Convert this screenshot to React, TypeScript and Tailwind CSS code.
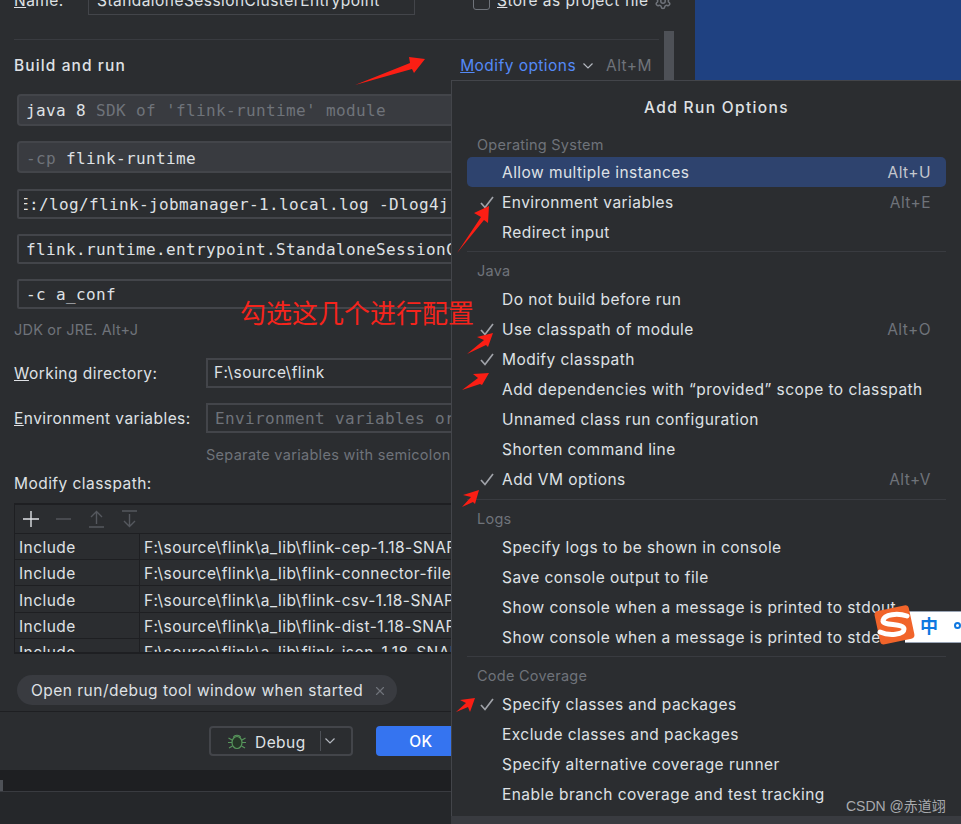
import React from "react";
import { Settings, X } from "lucide-react";

const ui = { fontFamily: "Inter, 'Noto Sans', sans-serif" };
const mono = { fontFamily: "'DejaVu Sans Mono', monospace" };

function Chevron({ className = "" }: { className?: string }) {
  return (
    <svg width="12" height="8" viewBox="0 0 12 8" className={className} fill="none" stroke="#b4b8bf" strokeWidth="1.2">
      <path d="M1.5 1.5 L6 6 L10.5 1.5" />
    </svg>
  );
}

function CheckMark() {
  return (
    <svg width="14" height="13" viewBox="0 0 14 13" fill="none" stroke="#a0a3a9" strokeWidth="1.7">
      <path d="M1 7 L5 11.5 L13 1" />
    </svg>
  );
}

function Item({ label, checked, hint, active }: { label: string; checked?: boolean; hint?: string; active?: boolean }) {
  return (
    <div className={`mx-[15px] flex h-[30px] shrink-0 items-center rounded-[5px] pr-[15px] pt-[1px] ${active ? "bg-[#2e436e]" : ""}`}>
      <div className="flex w-[35px] shrink-0 justify-end pr-[8px]">{checked && <CheckMark />}</div>
      <span className="whitespace-nowrap text-[#dfe1e5]">{label}</span>
      {hint && <span className={`ml-auto ${active ? "text-[#c4c7cd]" : "text-[#6f737a]"}`}>{hint}</span>}
    </div>
  );
}

function Label({ text, className = "" }: { text: string; className?: string }) {
  return <div className={`ml-[25px] h-[20px] text-[14.5px] leading-[20px] tracking-[0.25px] text-[#6f737a] ${className}`}>{text}</div>;
}

function Sep({ className = "" }: { className?: string }) {
  return <div className={`mx-[15px] h-px bg-[#393b40] ${className}`} />;
}

function Popup() {
  return (
    <div className="absolute left-[451px] top-[80px] flex h-[736px] w-[510px] flex-col overflow-hidden border-l border-t border-[#43454a] bg-[#2b2d30] text-[15.5px] tracking-[0.45px]" style={ui}>
      <div className="mt-[17px] h-[20px] pl-[20px] text-center font-medium leading-[20px] tracking-[1.35px] text-[#dfe1e5]">Add Run Options</div>
      <Label text="Operating System" className="mt-[17px]" />
      <div className="h-[2px]" />
      <Item label="Allow multiple instances" hint="Alt+U" active />
      <Item label="Environment variables" checked hint="Alt+E" />
      <Item label="Redirect input" />
      <Sep className="mt-[4px]" />
      <Label text="Java" className="mt-[9px]" />
      <div className="h-[3px]" />
      <Item label="Do not build before run" />
      <Item label="Use classpath of module" checked hint="Alt+O" />
      <Item label="Modify classpath" checked />
      <Item label="Add dependencies with “provided” scope to classpath" />
      <Item label="Unnamed class run configuration" />
      <Item label="Shorten command line" />
      <Item label="Add VM options" checked hint="Alt+V" />
      <Sep className="mt-[5px]" />
      <Label text="Logs" className="mt-[9px]" />
      <div className="h-[3px]" />
      <Item label="Specify logs to be shown in console" />
      <Item label="Save console output to file" />
      <Item label="Show console when a message is printed to stdout" />
      <Item label="Show console when a message is printed to stderr" />
      <Sep className="mt-[4px]" />
      <Label text="Code Coverage" className="mt-[9px]" />
      <div className="h-[3px]" />
      <Item label="Specify classes and packages" checked />
      <Item label="Exclude classes and packages" />
      <Item label="Specify alternative coverage runner" />
      <Item label="Enable branch coverage and test tracking" />
    </div>
  );
}

function Field({ children, filled, className = "" }: { children: React.ReactNode; filled?: boolean; className?: string }) {
  return (
    <div
      className={`ml-[17px] flex w-[643px] items-center overflow-hidden whitespace-nowrap border-2 pl-[7px] pt-[1px] text-[16px] tracking-[0.37px] ${
        filled ? "h-[32px] rounded-[4px] border-[#43454a] bg-[#393b40]" : "h-[30px] rounded-[2px] border-[#43454a]"
      } ${className}`}
      style={mono}
    >
      {children}
    </div>
  );
}

const rows = [
  { path: "F:\\source\\flink\\a_lib\\flink-cep-1.18-SNAPSHOT.jar", h: "h-[26px]" },
  { path: "F:\\source\\flink\\a_lib\\flink-connector-files-1.18-SNAPSHOT.jar", h: "h-[26px]" },
  { path: "F:\\source\\flink\\a_lib\\flink-csv-1.18-SNAPSHOT.jar", h: "h-[27px]" },
  { path: "F:\\source\\flink\\a_lib\\flink-dist-1.18-SNAPSHOT.jar", h: "h-[26px]" },
  { path: "F:\\source\\flink\\a_lib\\flink-json-1.18-SNAPSHOT.jar", h: "h-[26px]" },
];

function Toolbar() {
  return (
    <div className="flex h-[29px] items-center border-b border-[#1e1f22]">
      <svg width="120" height="24" viewBox="0 0 120 24" fill="none" className="ml-[4px]">
        <path d="M12 4 V20 M4 12 H20" stroke="#dfe1e5" strokeWidth="1.4" />
        <path d="M37 12 H52" stroke="#55585e" strokeWidth="1.4" />
        <path d="M70 20 H85 M77.5 17 V5 M72 10 L77.5 4.5 L83 10" stroke="#55585e" strokeWidth="1.4" />
        <path d="M103 4 H118 M110.5 7 V19 M105 14 L110.5 19.5 L116 14" stroke="#55585e" strokeWidth="1.4" />
      </svg>
    </div>
  );
}

function Dialog() {
  return (
    <div className="w-[695px] shrink-0 bg-[#2b2d30] text-[15.5px] tracking-[0.45px] text-[#dfe1e5]" style={ui}>
      <div className="flex h-[15px] items-end overflow-hidden pl-[14px]">
        <span className="w-[74px] pb-[5px] leading-[18px]"><u>N</u>ame:</span>
        <div className="flex h-[24px] w-[327px] items-center border border-[#43454a] pl-[8px]">
          <span className="-mt-[4px] whitespace-nowrap">StandaloneSessionClusterEntrypoint</span>
        </div>
        <div className="mb-[5px] ml-[58px] h-[16px] w-[17px] shrink-0 rounded-[3px] border border-[#6f737a]" />
        <span className="ml-[7px] whitespace-nowrap pb-[5px] leading-[18px]"><u>S</u>tore as project file</span>
        <Settings size={18} className="mb-[5px] ml-[5px] text-[#6f737a]" />
      </div>
      <div className="ml-[14px] mt-[24px] h-px w-[645px] bg-[#393b40]" />
      <div className="flex h-[50px] items-center pl-[14px] pr-[43px] pt-[1px]">
        <span className="font-medium tracking-[1.1px]">Build and run</span>
        <span className="ml-auto text-[#548af7]"><u>M</u>odify options</span>
        <Chevron className="ml-[6px]" />
        <span className="ml-[12px] text-[#6f737a]">Alt+M</span>
      </div>

      <Field filled className="mt-[4px]">
        <span>java 8</span>
        <span className="ml-[10px] text-[#6f737a]">SDK of 'flink-runtime' module</span>
      </Field>
      <Field filled className="mt-[15px] !pt-[3px]">
        <span className="text-[#6f737a]">-cp</span>
        <span className="ml-[10px]">flink-runtime</span>
      </Field>
      <Field className="mt-[16px] !pl-[5px]">
        <div className="overflow-hidden">
          <div className="-ml-[5px]">E:/log/flink-jobmanager-1.local.log -Dlog4j.configurationFile=conf/log4j.properties</div>
        </div>
      </Field>
      <Field className="mt-[15px]">flink.runtime.entrypoint.StandaloneSessionClusterEntrypoint</Field>
      <Field className="mt-[15px]">-c a_conf</Field>
      <div className="ml-[14px] mt-[11px] h-[20px] text-[14.5px] leading-[20px] tracking-[0.2px] text-[#6f737a]">JDK or JRE. Alt+J</div>

      <div className="mt-[18px] flex h-[30px] items-center pl-[14px]">
        <span className="w-[192px] pt-[1px]"><u>W</u>orking directory:</span>
        <div className="flex h-[30px] w-[440px] items-center border-2 border-[#43454a] pl-[6px]">F:\source\flink</div>
      </div>
      <div className="mt-[15px] flex h-[30px] items-center pl-[14px]">
        <span className="w-[192px] pt-[1px]"><u>E</u>nvironment variables:</span>
        <div className="flex h-[30px] w-[440px] items-center whitespace-nowrap border-2 border-[#43454a] pl-[7px] pt-[1px] text-[16px] tracking-[0.37px] text-[#6f737a]" style={mono}>
          Environment variables or .env files
        </div>
      </div>
      <div className="ml-[206px] mt-[12px] h-[20px] whitespace-nowrap text-[14.5px] leading-[20px] tracking-[0.3px] text-[#6f737a]">Separate variables with semicolons: VAR=value; VAR1=value1</div>
      <div className="ml-[14px] mt-[8px] h-[20px] pt-[1px] leading-[20px]">Modify classpath:</div>

      <div className="ml-[14px] mt-[10px] h-[151px] w-[645px] overflow-hidden border-y-2 border-l border-[#1e1f22]">
        <Toolbar />
        {rows.map((r) => (
          <div key={r.path} className={`flex ${r.h} items-center whitespace-nowrap border-b border-[#1e1f22]`}>
            <div className="flex h-full w-[125px] shrink-0 items-center border-r border-[#1e1f22] pl-[4px] pt-[3px]">Include</div>
            <div className="pl-[4px] pt-[3px]">{r.path}</div>
          </div>
        ))}
      </div>

      <div className="ml-[17px] mt-[21px] flex h-[30px] w-[380px] items-center rounded-full bg-[#393b40] pl-[14px] pt-[1px] tracking-[0.48px]">
        <span className="whitespace-nowrap">Open run/debug tool window when started</span>
        <X size={14} className="ml-[10px] text-[#6f737a]" />
      </div>
      <div className="mt-[6px] h-px bg-[#1e1f22]" />

      <div className="flex items-start pl-[209px] pt-[14px]">
        <div className="flex h-[30px] w-[144px] items-center rounded-[4px] border-2 border-[#43454a] pl-[16px]">
          <svg width="20" height="20" viewBox="0 0 20 20" fill="none" stroke="#57965c" strokeWidth="1.2">
            <ellipse cx="10" cy="11.5" rx="5" ry="6" fill="#253627" />
            <path d="M6.5 6.5 C7 3.5 13 3.5 13.5 6.5 M5 9 L1.5 7 M15 9 L18.5 7 M5 11.5 H1 M15 11.5 H19 M5.5 15 L2 17 M14.5 15 L18 17" />
          </svg>
          <span className="ml-[8px] w-[65px] pt-[3px]">Debug</span>
          <div className="h-[20px] w-px bg-[#4e5157]" />
          <Chevron className="ml-[3px]" />
        </div>
        <div className="ml-[23px] flex h-[30px] w-[90px] items-center justify-center rounded-[4px] bg-[#3574f0] pt-[1px] font-medium text-white">OK</div>
      </div>
    </div>
  );
}

function Arrows() {
  return (
    <svg className="pointer-events-none absolute left-0 top-0" width="961" height="824" viewBox="0 0 961 824" fill="#fb1e14">
      <polygon points="355,85 410,63 409,57 425,59 414,73 412,69" />
      <polygon points="457,253 481,217 474,213 489,206 488,223 484,220" />
      <polygon points="467,354 484,340 477,337 493,333 488,347 486,345" />
      <polygon points="462,390 478,378 473,374 489,373 482,385 480,384" />
      <polygon points="462,507 471,497 463,495 479,490 475,504 473,502" />
      <polygon points="456,712 466,703 460,700 475,698 470,712 468,707" />
    </svg>
  );
}

function Ime() {
  return (
    <div className="absolute left-[874px] top-[605px] h-[40px] w-[87px]">
      <div className="absolute left-[31px] top-[6px] flex h-[32px] w-[56px] items-center border-y border-[#9aa5b5] bg-white">
        <span className="-mt-[5px] ml-[15px] text-[18px] font-bold leading-none text-[#0f78e0]" style={{ fontFamily: "'Noto Sans CJK SC', sans-serif" }}>中</span>
        <div className="-mt-[4px] ml-[16px] h-[7px] w-[7px] rounded-full border-2 border-[#0f78e0]" />
      </div>
      <svg width="42" height="40" viewBox="0 0 42 40" className="absolute left-0 top-0">
        <rect x="3" y="3" width="35" height="34" rx="4" fill="#f1642a" transform="rotate(-12 20 20)" />
        <path d="M33 11 C24 8 10 9 9 15.5 C8 21 30 18 30 24 C30 30 15 31 6 27" fill="none" stroke="#fff" strokeWidth="5" strokeLinecap="round" />
      </svg>
    </div>
  );
}

export default function App() {
  return (
    <div className="relative flex h-[824px] w-[961px] flex-col overflow-hidden bg-[#1e1f22]">
      <div className="flex h-[770px] shrink-0 overflow-hidden">
        <Dialog />
        <div className="flex-1 bg-[#1f4181]" />
      </div>
      <div className="flex h-[22px] items-end border-b border-[#393b40] bg-[#1e1f22]">
        <div className="h-[11px] w-[3px] bg-[#4e5157]" />
      </div>
      <div className="flex-1 bg-[#25272a]" />
      <div className="absolute left-[664px] top-[31px] h-[60px] w-[10px] bg-[#4e5157]" />
      <Popup />
      <div className="absolute bottom-0 left-[451px] h-[8px] w-[510px] bg-[#393b40]" />
      <Arrows />
      <div className="absolute left-[240px] top-[294px] whitespace-nowrap text-[26px] leading-[36px] text-[#f5241c]" style={{ fontFamily: "'Noto Sans CJK SC', sans-serif" }}>勾选这几个进行配置</div>
      <Ime />
      <div className="absolute left-[846px] top-[797px] whitespace-nowrap text-[14px] leading-[18px] text-[#a9abaf]" style={{ fontFamily: "'Liberation Sans', 'Noto Sans CJK SC', sans-serif" }}>CSDN @赤道翊</div>
    </div>
  );
}
